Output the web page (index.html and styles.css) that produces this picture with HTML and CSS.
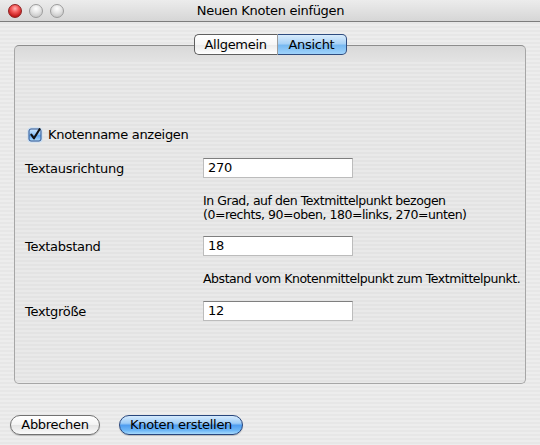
FILE: index.html
```html
<!DOCTYPE html>
<html lang="de">
<head>
<meta charset="utf-8">
<title>Neuen Knoten einfügen</title>
<link rel="stylesheet" href="styles.css">
</head>
<body>
<div class="window">
  <div class="titlebar">
    <div class="lights">
      <span class="light red"></span>
      <span class="light gray"></span>
      <span class="light gray"></span>
    </div>
    <div class="title">Neuen Knoten einfügen</div>
  </div>
  <div class="content">
    <div class="tabs">
      <span class="tab">Allgemein</span><span class="tab active">Ansicht</span>
    </div>
    <div class="panel">
      <label class="check-row">
        <svg class="checkbox" width="16" height="16" viewBox="0 0 16 16">
          <defs>
            <linearGradient id="cbg" x1="0" y1="0" x2="0" y2="1">
              <stop offset="0" stop-color="#d3e9fd"/>
              <stop offset="0.5" stop-color="#86bff4"/>
              <stop offset="0.55" stop-color="#5fa6ee"/>
              <stop offset="1" stop-color="#b5defc"/>
            </linearGradient>
          </defs>
          <rect x="0.5" y="0.5" width="15" height="15" rx="3.5" fill="#bcd8f5" opacity="0.8"/>
          <rect x="2" y="2" width="12" height="12" rx="2" fill="url(#cbg)" stroke="#34578f" stroke-width="1"/>
          <path d="M4.3 7.6 L7 11.3 L12.6 2.2" fill="none" stroke="#111" stroke-width="2.1" stroke-linecap="round" stroke-linejoin="round"/>
        </svg>
        <span>Knotenname anzeigen</span>
      </label>
      <div class="field row1">
        <span class="label">Textausrichtung</span>
        <span class="input">270</span>
      </div>
      <div class="help help1">In Grad, auf den Textmittelpunkt bezogen<br>(0=rechts, 90=oben, 180=links, 270=unten)</div>
      <div class="field row2">
        <span class="label">Textabstand</span>
        <span class="input">18</span>
      </div>
      <div class="help help2">Abstand vom Knotenmittelpunkt zum Textmittelpunkt.</div>
      <div class="field row3">
        <span class="label">Textgröße</span>
        <span class="input">12</span>
      </div>
    </div>
    <div class="buttons">
      <span class="btn">Abbrechen</span>
      <span class="btn default">Knoten erstellen</span>
    </div>
  </div>
</div>
</body>
</html>
```
FILE: styles.css
```css
* { box-sizing: border-box; }
html, body { margin: 0; padding: 0; }
body {
  font-family: "DejaVu Sans", "Liberation Sans", sans-serif;
  font-size: 13px;
  letter-spacing: -0.3px;
  color: #000;
}
.window {
  width: 540px;
  height: 445px;
  overflow: hidden;
  background: repeating-linear-gradient(to bottom, #ededed 0 2px, #e7e7e7 2px 4px);
}
.titlebar {
  height: 22px;
  border-bottom: 1px solid #7d7d7d;
  background: linear-gradient(to bottom, #ececec, #d6d6d6);
  display: flex;
  align-items: center;
}
.lights {
  display: flex;
  gap: 7px;
  padding-left: 8px;
}
.light {
  width: 14px;
  height: 14px;
  border-radius: 50%;
  display: block;
}
.light.red {
  background: radial-gradient(circle at 50% 30%, #ffb3b3 0, #f45a5a 35%, #c21a1a 75%, #a51515 100%);
  border: 1px solid #8e2020;
}
.light.gray {
  background: radial-gradient(circle at 50% 30%, #ffffff 0, #e6e6e6 40%, #c4c4c4 85%);
  border: 1px solid #9c9c9c;
}
.title {
  flex: 1;
  text-align: center;
  margin-left: -63px;
  line-height: 22px;
}
.content {
  padding: 0 14px;
}
.tabs {
  margin-top: 12px;
  display: flex;
  justify-content: center;
  position: relative;
  z-index: 1;
}
.tab {
  height: 21px;
  line-height: 19px;
  border: 1px solid #5f5f5f;
  background: linear-gradient(to bottom, #ffffff 0, #f6f6f6 50%, #e9e9e9 51%, #ffffff 100%);
  padding: 0 9px;
  display: block;
}
.tab:first-child {
  border-radius: 5px 0 0 5px;
  border-right: 1px solid #9a9a9a;
  width: 84px;
  padding-left: 10px;
}
.tab.active {
  border-radius: 0 5px 5px 0;
  border-color: #2e4c7f;
  border-left: none;
  width: 69px;
  padding-left: 11px;
  background: linear-gradient(to bottom, #d9ecfc 0, #a9d2f6 45%, #78b9f1 55%, #9fd3fb 100%);
}
.panel {
  margin-top: -10px;
  height: 339px;
  border: 1px solid #a6a6a6;
  border-top-color: #8d8d8d;
  border-radius: 5px;
  background:
    linear-gradient(to bottom, #d9d9d9 0, #e2e2e2 14px, rgba(230,230,230,0) 16px),
    repeating-linear-gradient(to bottom, #e9e9e9 0 2px, #e3e3e3 2px 4px);
  padding: 81px 0 0 10px;
  display: flex;
  flex-direction: column;
}
.check-row {
  display: flex;
  align-items: center;
  gap: 5px;
  margin-left: 2px;
  height: 16px;
  line-height: 16px;
}
.checkbox { display: block; }
.field {
  display: flex;
  align-items: center;
  height: 20px;
}
.label {
  width: 178px;
}
.input {
  width: 150px;
  height: 20px;
  line-height: 18px;
  background: #fff;
  border: 1px solid #bcbcbc;
  border-top-color: #7f7f7f;
  padding-left: 4px;
  display: block;
}
.row1 { margin-top: 15px; }
.help {
  margin-left: 178px;
  font-size: 12.5px;
  line-height: 14px;
  white-space: nowrap;
  letter-spacing: -0.45px;
}
.help1 { margin-top: 16px; }
.row2 { margin-top: 14px; }
.help2 { margin-top: 16px; }
.row3 { margin-top: 15px; }
.buttons {
  display: flex;
  gap: 19px;
  margin-top: 31px;
  margin-left: -4px;
}
.btn {
  display: block;
  height: 20px;
  line-height: 18px;
  border-radius: 10px;
  border: 1px solid #717171;
  text-align: center;
  background: linear-gradient(to bottom, #ffffff 0, #f3f3f3 50%, #e4e4e4 52%, #fafafa 100%);
  box-shadow: 0 1px 1px rgba(0,0,0,0.2);
}
.btn:first-child { width: 90px; }
.btn.default {
  width: 124px;
  border-color: #28467d;
  background: linear-gradient(to bottom, #d5eafd 0, #9dccf7 40%, #4f9df0 52%, #6eb7f6 80%, #a7dafc 100%);
}
```
